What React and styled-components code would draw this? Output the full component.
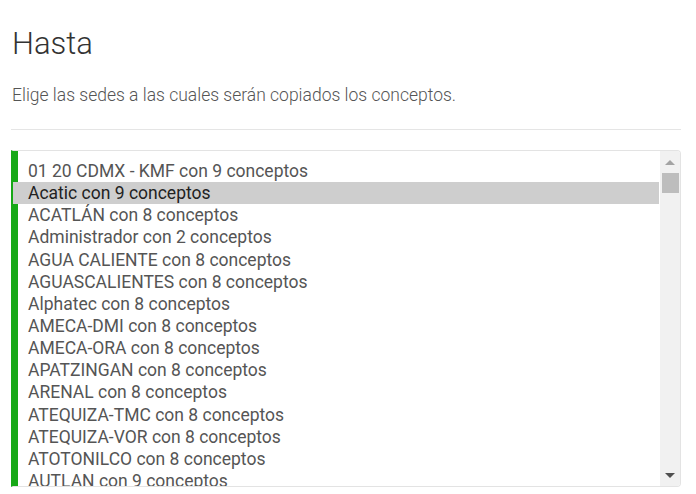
import React from "react"
import styled, { createGlobalStyle } from "styled-components"

const sedes = [
  "01 20 CDMX - KMF con 9 conceptos",
  "Acatic con 9 conceptos",
  "ACATLÁN con 8 conceptos",
  "Administrador con 2 conceptos",
  "AGUA CALIENTE con 8 conceptos",
  "AGUASCALIENTES con 8 conceptos",
  "Alphatec con 8 conceptos",
  "AMECA-DMI con 8 conceptos",
  "AMECA-ORA con 8 conceptos",
  "APATZINGAN con 8 conceptos",
  "ARENAL con 8 conceptos",
  "ATEQUIZA-TMC con 8 conceptos",
  "ATEQUIZA-VOR con 8 conceptos",
  "ATOTONILCO con 8 conceptos",
  "AUTLAN con 9 conceptos",
  "AYOTLAN con 8 conceptos",
]

const GlobalStyle = createGlobalStyle`
  html, body {
    margin: 0;
    padding: 0;
    background: #fff;
  }
  body {
    font-family: Roboto, "Liberation Sans", sans-serif;
  }
`

const App = () => {
  const selected = 1

  return (
    <>
      <GlobalStyle />
      <Page>
        <Title>Hasta</Title>
        <Subtitle>Elige las sedes a las cuales serán copiados los conceptos.</Subtitle>
        <Divider />
        <ListBox>
          <Options>
            {sedes.map((sede, i) => (
              <Option key={sede} $selected={i === selected}>{sede}</Option>
            ))}
          </Options>
          <Scrollbar>
            <Arrow $up />
            <Track>
              <Thumb />
            </Track>
            <Arrow />
          </Scrollbar>
        </ListBox>
      </Page>
    </>
  )
}

const Page = styled.div`
  padding: 0 15px 0 11px;
  height: 494px;
  box-sizing: border-box;
  overflow: hidden;
`

const Title = styled.h1`
  margin: 27px 0 0 1px;
  font-size: 31px;
  line-height: 33px;
  font-weight: 300;
  color: #333;
`

const Subtitle = styled.p`
  margin: 24px 0 0 1px;
  font-size: 17.5px;
  line-height: 22px;
  font-weight: 300;
  color: #555;
`

const Divider = styled.hr`
  margin: 23px 0 0;
  border: 0;
  border-top: 1px solid #e5e5e5;
`

const ListBox = styled.div`
  margin-top: 20px;
  height: 337px;
  box-sizing: border-box;
  display: flex;
  border: 1px solid #e3e3e3;
  border-left: 2px solid #16a816;
  border-radius: 0 4px 4px 0;
  overflow: hidden;
`

const Options = styled.div`
  flex: 1;
  padding-top: 9px;
  margin-right: 1px;
  box-shadow: inset 5px 0 0 #16a816;
  overflow: hidden;
`

const Option = styled.div`
  height: 22.15px;
  line-height: 22px;
  padding-left: 15px;
  font-size: 17.5px;
  white-space: nowrap;
  color: ${p => (p.$selected ? "#222" : "#555")};
  background: ${p => (p.$selected ? "#cecece" : "transparent")};
`

const Scrollbar = styled.div`
  width: 20px;
  display: flex;
  flex-direction: column;
  background: #f1f1f1;
`

const Arrow = styled.div`
  height: 22px;
  display: flex;
  align-items: center;
  justify-content: center;

  &::before {
    content: "";
    width: 0;
    height: 0;
    border-left: 5px solid transparent;
    border-right: 5px solid transparent;
    ${p => p.$up
      ? "border-bottom: 5px solid #a3a3a3;"
      : "border-top: 5px solid #505050;"}
  }
`

const Track = styled.div`
  flex: 1;
  padding: 0 1px 0 2px;
`

const Thumb = styled.div`
  height: 20px;
  background: #bdbdbd;
`

export default App
